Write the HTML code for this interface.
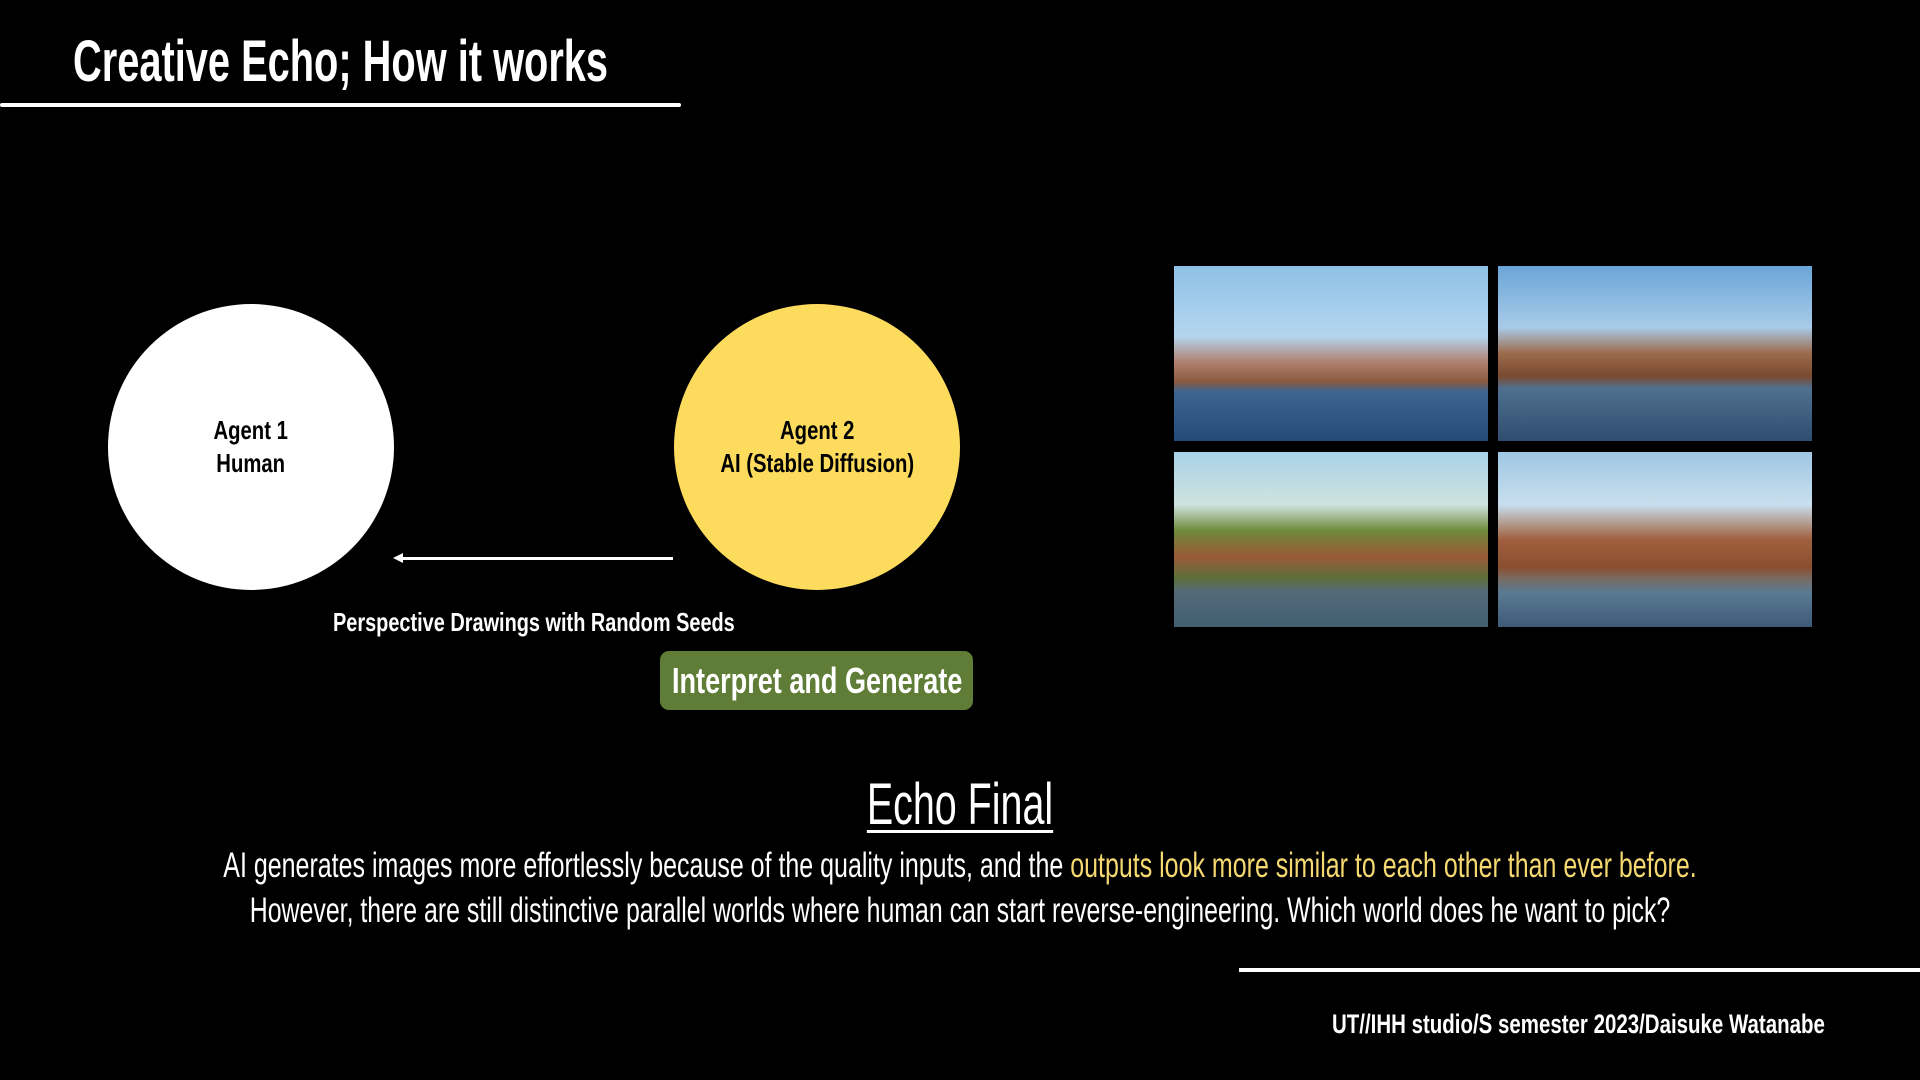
<!DOCTYPE html>
<html><head><meta charset="utf-8"><style>
html,body{margin:0;padding:0;background:#000;}
body{width:1920px;height:1080px;position:relative;overflow:hidden;font-family:"Liberation Sans Narrow","Liberation Sans",sans-serif;color:#fff;}
.a{position:absolute;white-space:nowrap;}
.sx{display:inline-block;transform-origin:left top;}
.cx{position:absolute;left:0;top:0;display:inline-block;transform-origin:center top;white-space:nowrap;}
.c{border-radius:50%;position:absolute;display:flex;align-items:center;justify-content:center;text-align:center;color:#000;font-weight:bold;font-size:26px;line-height:33px;}
.img{position:absolute;width:314px;height:175px;overflow:hidden;}
</style></head><body>

<div class="a" style="left:73px;top:30px;font-size:58px;font-weight:bold;line-height:64px;"><span class="sx" style="transform:scaleX(0.686)">Creative Echo; How it works</span></div>
<div class="a" style="left:0;top:103px;width:681px;height:4px;background:#fff;border-radius:2px;"></div>

<div class="c" style="left:108px;top:304px;width:286px;height:286px;background:#fff;"><span style="transform:scaleX(0.78);display:inline-block">Agent 1<br>Human</span></div>
<div class="c" style="left:674px;top:304px;width:286px;height:286px;background:#fddc5d;"><span style="transform:scaleX(0.78);display:inline-block">Agent 2<br>AI (Stable Diffusion)</span></div>

<div class="a" style="left:400px;top:557px;width:273px;height:3px;background:#fff;"></div>
<div class="a" style="left:393px;top:553px;width:0;height:0;border-top:5px solid transparent;border-bottom:5px solid transparent;border-right:10px solid #fff;"></div>

<div class="a" style="left:333px;top:607px;font-size:26px;font-weight:bold;line-height:30px;"><span class="sx" style="transform:scaleX(0.766)">Perspective Drawings with Random Seeds</span></div>

<div class="a" style="left:660px;top:651px;width:313px;height:59px;background:#5f7d37;border-radius:9px;"></div>
<div class="a" style="left:672px;top:660px;font-size:36px;font-weight:bold;line-height:42px;"><span class="sx" style="transform:scaleX(0.752)">Interpret and Generate</span></div>

<div class="img" style="left:1174px;top:266px;background:linear-gradient(#8ec0e6 0%,#b4d6ef 40%,#b08070 55%,#8a5a3f 66%,#3d6590 72%,#244a7a 100%);"></div>
<div class="img" style="left:1498px;top:266px;background:linear-gradient(#6aa5d8 0%,#a8cbe8 35%,#9c6a4c 50%,#7a4a30 63%,#50708f 70%,#2e4d70 100%);"></div>
<div class="img" style="left:1174px;top:452px;background:linear-gradient(#a8d2e6 0%,#cfe3e0 30%,#6f8a3a 45%,#9a5a38 60%,#5d6f3a 72%,#556a7a 80%,#3f5f70 100%);"></div>
<div class="img" style="left:1498px;top:452px;background:linear-gradient(#9fc7e4 0%,#c8dfee 30%,#a0603e 50%,#8a4e30 66%,#7a6a60 72%,#5a7a92 80%,#3e5a78 100%);"></div>

<div class="a" style="left:960px;width:0;top:772px;font-size:58px;line-height:66px;"><span class="cx" style="transform:translateX(-50%) scaleX(0.68);text-decoration:underline;text-decoration-thickness:3px;text-underline-offset:6px;">Echo Final</span></div>
<div class="a" style="left:960px;width:0;top:844px;font-size:35px;line-height:44px;"><span class="cx" style="transform:translateX(-50%) scaleX(0.714);">AI generates images more effortlessly because of the quality inputs, and the <span style="color:#f5d970">outputs look more similar to each other than ever before.</span></span></div>
<div class="a" style="left:960px;width:0;top:889px;font-size:35px;line-height:44px;"><span class="cx" style="transform:translateX(-50%) scaleX(0.711);">However, there are still distinctive parallel worlds where human can start reverse-engineering. Which world does he want to pick?</span></div>

<div class="a" style="left:1239px;top:968px;width:681px;height:4px;background:#fff;"></div>
<div class="a" style="left:1332px;top:1008px;font-size:27px;font-weight:bold;line-height:32px;"><span class="sx" style="transform:scaleX(0.758)">UT//IHH studio/S semester 2023/Daisuke Watanabe</span></div>
</body></html>
